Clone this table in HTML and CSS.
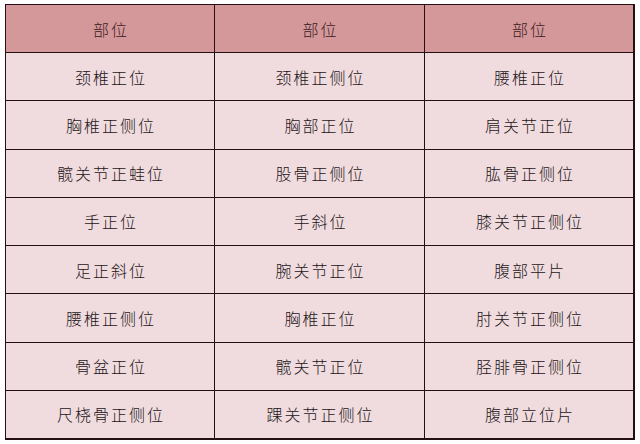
FILE: index.html
```html
<!DOCTYPE html>
<html lang="zh">
<head>
<meta charset="utf-8">
<link rel="stylesheet" href="styles.css">
</head>
<body>
<div class="page">
  <div class="grid">
    <div class="cell head">部位</div>
    <div class="cell head">部位</div>
    <div class="cell head">部位</div>
    <div class="cell">颈椎正位</div>
    <div class="cell">颈椎正侧位</div>
    <div class="cell">腰椎正位</div>
    <div class="cell">胸椎正侧位</div>
    <div class="cell">胸部正位</div>
    <div class="cell">肩关节正位</div>
    <div class="cell">髋关节正蛙位</div>
    <div class="cell">股骨正侧位</div>
    <div class="cell">肱骨正侧位</div>
    <div class="cell">手正位</div>
    <div class="cell">手斜位</div>
    <div class="cell">膝关节正侧位</div>
    <div class="cell">足正斜位</div>
    <div class="cell">腕关节正位</div>
    <div class="cell">腹部平片</div>
    <div class="cell">腰椎正侧位</div>
    <div class="cell">胸椎正位</div>
    <div class="cell">肘关节正侧位</div>
    <div class="cell">骨盆正位</div>
    <div class="cell">髋关节正位</div>
    <div class="cell">胫腓骨正侧位</div>
    <div class="cell">尺桡骨正侧位</div>
    <div class="cell">踝关节正侧位</div>
    <div class="cell">腹部立位片</div>
  </div>
</div>
</body>
</html>
```
FILE: styles.css
```css
html, body {
  margin: 0;
  padding: 0;
  background: #ffffff;
}
.page {
  padding: 4px 0 0 5px;
}
.grid {
  box-sizing: border-box;
  width: 630px;
  height: 436px;
  display: grid;
  grid-template-columns: 208px 209px 1fr;
  grid-template-rows: repeat(9, 1fr);
  gap: 1px;
  background: #241012;
  border-style: solid;
  border-color: #241012;
  border-width: 1px 2px 2px 1px;
}
.cell {
  display: flex;
  align-items: center;
  justify-content: center;
  background: #f0dcdf;
  font-family: "Noto Sans CJK SC", sans-serif;
  font-weight: 300;
  font-size: 16px;
  letter-spacing: 2px;
  padding-left: 2px;
  color: #1c1416;
}
.cell.head {
  background: #d5989a;
  color: #3a1a1c;
}
```
